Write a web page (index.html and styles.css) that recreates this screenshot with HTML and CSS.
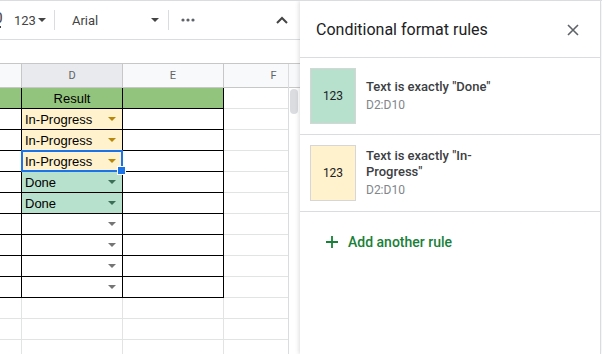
FILE: index.html
```html
<!DOCTYPE html>
<html lang="en">
<head>
    <meta charset="UTF-8">
    <meta name="viewport" content="width=device-width, initial-scale=1.0">
    <title>Conditional format rules</title>
    <link rel="stylesheet" href="styles.css">
</head>
<body>
<div class="app">
    <!-- Sheet side -->
    <div class="sheet">
        <div class="toolbar">
            <span class="dec">0<svg width="6" height="4" viewBox="0 0 6 4"><path d="M0 2h5M3.5 0.5L5 2 3.5 3.5" stroke="#444" stroke-width="1" fill="none"/></svg></span>
            <span class="num">123</span>
            <i class="tb-caret"></i>
            <span class="divider"></span>
            <div class="font-select">
                <span>Arial</span>
                <i class="tb-caret"></i>
            </div>
            <span class="divider"></span>
            <svg class="more" width="14" height="4" viewBox="0 0 14 4">
                <circle cx="2" cy="2" r="1.6" fill="#5f6368"/>
                <circle cx="7" cy="2" r="1.6" fill="#5f6368"/>
                <circle cx="12" cy="2" r="1.6" fill="#5f6368"/>
            </svg>
            <svg class="collapse" width="12" height="8" viewBox="0 0 12 8">
                <path d="M1 7L6 2l5 5" stroke="#444" stroke-width="2" fill="none"/>
            </svg>
        </div>
        <div class="formula-bar"></div>
        <div class="grid-wrap">
            <div class="grid-clip">
                <table class="grid">
                    <colgroup>
                        <col class="c-col"><col class="d-col"><col class="e-col"><col class="f-col">
                    </colgroup>
                    <thead>
                        <tr><th></th><th class="sel-col">D</th><th>E</th><th>F</th></tr>
                    </thead>
                    <tbody>
                        <tr class="head-row"><td class="box"></td><td class="box center">Result</td><td class="box"></td><td></td></tr>
                        <tr><td class="box"></td><td class="box yellow"><div class="dd"><span>In-Progress</span><i class="caret gold"></i></div></td><td class="box"></td><td></td></tr>
                        <tr><td class="box"></td><td class="box yellow"><div class="dd"><span>In-Progress</span><i class="caret gold"></i></div></td><td class="box"></td><td></td></tr>
                        <tr><td class="box"></td><td class="box yellow sel"><div class="dd"><span>In-Progress</span><i class="caret gold"></i></div></td><td class="box"></td><td></td></tr>
                        <tr><td class="box"></td><td class="box green"><div class="dd"><span>Done</span><i class="caret dark"></i></div></td><td class="box"></td><td></td></tr>
                        <tr><td class="box"></td><td class="box green"><div class="dd"><span>Done</span><i class="caret dark"></i></div></td><td class="box"></td><td></td></tr>
                        <tr><td class="box"></td><td class="box"><div class="dd"><span></span><i class="caret"></i></div></td><td class="box"></td><td></td></tr>
                        <tr><td class="box"></td><td class="box"><div class="dd"><span></span><i class="caret"></i></div></td><td class="box"></td><td></td></tr>
                        <tr><td class="box"></td><td class="box"><div class="dd"><span></span><i class="caret"></i></div></td><td class="box"></td><td></td></tr>
                        <tr><td class="box"></td><td class="box"><div class="dd"><span></span><i class="caret"></i></div></td><td class="box"></td><td></td></tr>
                        <tr><td></td><td></td><td></td><td></td></tr>
                        <tr><td></td><td></td><td></td><td></td></tr>
                        <tr><td></td><td></td><td></td><td></td></tr>
                    </tbody>
                </table>
            </div>
            <div class="scrollbar">
                <div class="scroll-head"></div>
                <div class="thumb"></div>
            </div>
        </div>
    </div>

    <!-- Side panel -->
    <div class="panel">
        <div class="panel-header">
            <h2>Conditional format rules</h2>
            <svg class="close" width="12" height="12" viewBox="0 0 12 12">
                <path d="M1 1l10 10M11 1L1 11" stroke="#5f6368" stroke-width="1.6"/>
            </svg>
        </div>
        <div class="rule">
            <div class="swatch swatch-green">123</div>
            <div class="rule-text">
                <div class="rule-title">Text is exactly "Done"</div>
                <div class="rule-range">D2:D10</div>
            </div>
        </div>
        <div class="rule">
            <div class="swatch swatch-yellow">123</div>
            <div class="rule-text">
                <div class="rule-title">Text is exactly "In-Progress"</div>
                <div class="rule-range">D2:D10</div>
            </div>
        </div>
        <div class="add-rule">
            <svg width="12" height="12" viewBox="0 0 12 12">
                <path d="M6 0v12M0 6h12" stroke="#188038" stroke-width="1.8"/>
            </svg>
            <span>Add another rule</span>
        </div>
    </div>
</div>
</body>
</html>
```

FILE: styles.css
```css
* {
    box-sizing: border-box;
}

body {
    margin: 0;
    font-family: Roboto, Arial, sans-serif;
    background: #fff;
}

.app {
    display: flex;
    width: 602px;
    height: 354px;
    overflow: hidden;
    border-top: 1px solid #dadce0;
}

/* Sheet side */
.sheet {
    width: 300px;
    flex-shrink: 0;
    display: flex;
    flex-direction: column;
}

.toolbar {
    height: 39px;
    display: flex;
    align-items: center;
    border-bottom: 1px solid #dadce0;
    color: #444;
    font-size: 13px;
}

.dec {
    display: flex;
    flex-direction: column;
    align-items: center;
    width: 9px;
    margin-left: -6px;
    font-size: 15px;
    line-height: 13px;
}

.num {
    margin-left: 11px;
}

.tb-caret {
    width: 0;
    height: 0;
    border-left: 4px solid transparent;
    border-right: 4px solid transparent;
    border-top: 4px solid #444;
    margin-left: 2px;
}

.divider {
    width: 1px;
    height: 20px;
    background: #dadce0;
    margin-left: 8px;
}

.font-select {
    width: 90px;
    margin-left: 17px;
    display: flex;
    align-items: center;
    justify-content: space-between;
    padding-right: 3px;
}

.font-select + .divider {
    margin-left: 6px;
}

.more {
    margin-left: 12px;
}

.collapse {
    margin-left: auto;
    margin-right: 12px;
}

.formula-bar {
    height: 24px;
    border-bottom: 1px solid #c7c7c7;
}

.grid-wrap {
    flex: 1;
    display: flex;
    overflow: hidden;
}

.grid-clip {
    width: 288px;
    overflow: hidden;
}

.grid {
    width: 324px;
    table-layout: fixed;
    border-collapse: separate;
    border-spacing: 0;
}

.c-col { width: 22px; }
.d-col { width: 101px; }
.e-col { width: 101px; }
.f-col { width: 100px; }

.grid th {
    height: 24px;
    padding: 0;
    background: #f8f9fa;
    border-right: 1px solid #c7c7c7;
    border-bottom: 1px solid #c7c7c7;
    font-size: 11px;
    font-weight: normal;
    color: #5f6368;
    text-align: center;
}

.grid th.sel-col {
    background: #e8eaed;
}

.grid td {
    height: 21px;
    padding: 0 3px;
    border-right: 1px solid #e2e3e3;
    border-bottom: 1px solid #e2e3e3;
    font-family: "Liberation Sans", Arial, sans-serif;
    font-size: 13px;
    color: #000;
    white-space: nowrap;
}

.grid td.box {
    border-right-color: #000;
    border-bottom-color: #000;
}

.head-row td.box {
    background: #93c47d;
}

.grid td.center {
    text-align: center;
}

.grid td.yellow {
    background: #fff2cc;
}

.grid td.green {
    background: #b7e1cd;
}

/* selected cell */
.grid td.sel {
    position: relative;
}

.grid td.sel::after {
    content: "";
    position: absolute;
    left: -1px;
    top: -1px;
    right: -1px;
    bottom: -1px;
    border: 2px solid #1a73e8;
}

.grid td.sel::before {
    content: "";
    position: absolute;
    right: -4px;
    bottom: -4px;
    width: 7px;
    height: 7px;
    background: #1a73e8;
    border: 1px solid #fff;
    z-index: 1;
}

.dd {
    display: flex;
    align-items: center;
    justify-content: space-between;
}

.caret {
    width: 0;
    height: 0;
    border-left: 4px solid transparent;
    border-right: 4px solid transparent;
    border-top: 4px solid #757575;
    margin-right: 3px;
}

.caret.gold {
    border-top-color: #b8860b;
}

.caret.dark {
    border-top-color: #3b6e57;
}

.scrollbar {
    width: 12px;
    border-left: 1px solid #dadce0;
}

.scroll-head {
    height: 24px;
    background: #f8f9fa;
    border-bottom: 1px solid #c7c7c7;
}

.thumb {
    width: 8px;
    height: 25px;
    margin: 1px 0 0 1px;
    border-radius: 4px;
    background: #dadce0;
}

/* Side panel */
.panel {
    position: relative;
    width: 301px;
    flex-shrink: 0;
    background: #fff;
    border-right: 1px solid #dadce0;
    box-shadow: -1px 0 4px rgba(60, 64, 67, 0.18);
}

.panel-header {
    height: 57px;
    display: flex;
    align-items: center;
    justify-content: space-between;
    padding: 0 21px 0 16px;
    border-bottom: 1px solid #dadce0;
}

.panel-header h2 {
    margin: 0;
    font-size: 16px;
    font-weight: normal;
    color: #202124;
}

.close {
    margin-top: 2px;
}

.rule {
    display: flex;
    align-items: center;
    padding: 10px;
    border-bottom: 1px solid #dadce0;
}

.swatch {
    width: 46px;
    height: 56px;
    flex-shrink: 0;
    display: flex;
    align-items: center;
    justify-content: center;
    border: 1px solid #d6d6d6;
    font-size: 12px;
    color: #202124;
}

.swatch-green {
    background: #b7e1cd;
}

.swatch-yellow {
    background: #fff2cc;
}

.rule-text {
    margin-left: 10px;
}

.rule-title {
    max-width: 145px;
    font-size: 13px;
    font-weight: 500;
    line-height: 16px;
    color: #3c4043;
}

.rule-range {
    margin-top: 2px;
    font-size: 12px;
    line-height: 16px;
    color: #80868b;
}

.add-rule {
    display: flex;
    align-items: center;
    gap: 10px;
    padding: 21px 0 0 26px;
    font-size: 14px;
    font-weight: 500;
    line-height: 18px;
    color: #188038;
}
```
